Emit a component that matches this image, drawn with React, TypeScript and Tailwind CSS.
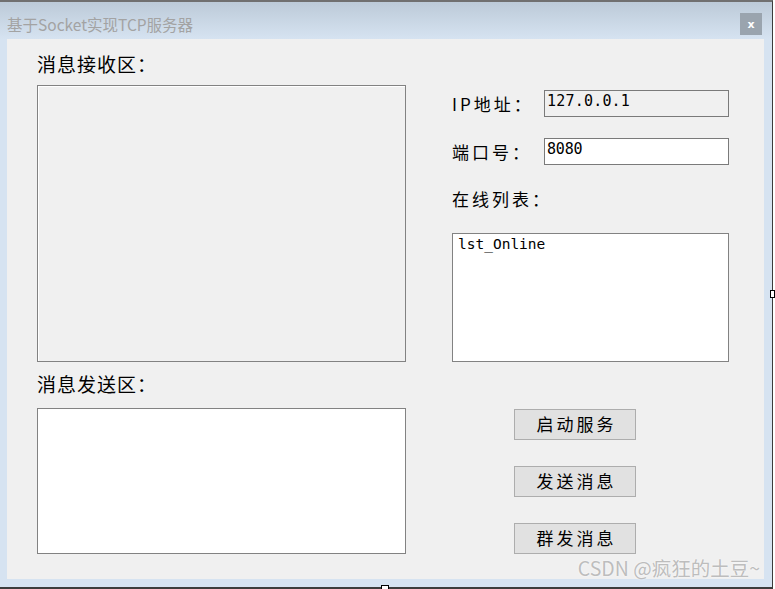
import React from 'react';

const cjk = "font-['Noto_Sans_CJK_SC','Noto_Sans',sans-serif]";
const mono = "font-['DejaVu_Sans_Mono','Liberation_Mono',monospace]";

const buttons = ['启动服务', '发送消息', '群发消息'];

const App: React.FC = () => {
  return (
    <div className="relative w-[775px] h-[589px] bg-white overflow-hidden">
      {/* window frame */}
      <div className="flex flex-col w-[773px] h-[589px] border-t-2 border-b-2 border-r border-t-[#707070] border-b-[#3c3c3c] border-r-[#3c3c3c] bg-[#d6e3f1]">
        {/* title bar */}
        <div className="flex items-center justify-between h-[37px] shrink-0 pt-[7px] pl-[7px] pr-[10px] bg-gradient-to-b from-[#bccad8] to-[#d6e3f1]">
          <span className={`${cjk} text-[15.5px] leading-[20px] text-[#a3a3a3]`}>
            基于Socket实现TCP服务器
          </span>
          <div className="flex items-center justify-center w-[22px] h-[22px] bg-[#9aa4ae] text-white text-[11px] font-bold leading-none font-['DejaVu_Sans',sans-serif]">
            x
          </div>
        </div>

        {/* client area */}
        <div className={`${cjk} flex ml-[7px] w-[757px] h-[540px] bg-[#f0f0f0] pl-[30px] gap-[46px] text-black`}>
          {/* left column */}
          <div className="flex flex-col w-[369px]">
            <div className="h-[46px] pt-[15px] text-[19px] leading-[20px] tracking-[1px]">消息接收区：</div>
            <div className="h-[277px] border border-[#828282] bg-[#f0f0f0] shadow-[inset_1px_1px_0_#ffffff]" />
            <div className="h-[46px] pt-[12px] text-[19px] leading-[20px] tracking-[1px]">消息发送区：</div>
            <div className="h-[146px] border border-[#828282] bg-white" />
          </div>

          {/* right column */}
          <div className="flex flex-col w-[277px] pt-[51px]">
            <div className="flex items-center h-[27px]">
              <span className="w-[92px] text-[17px] leading-[20px] tracking-[3px]">IP地址：</span>
              <div className={`${mono} flex-1 h-[27px] border border-[#7a7a7a] bg-[#f0f0f0] pl-[2px] text-[15px] leading-[20px] tracking-[0.2px]`}>
                127.0.0.1
              </div>
            </div>
            <div className="flex items-center h-[27px] mt-[21px]">
              <span className="w-[92px] text-[17px] leading-[20px] tracking-[3px]">端口号：</span>
              <div className={`${mono} flex-1 h-[27px] border border-[#7a7a7a] bg-white pl-[2px] text-[15px] leading-[20px] tracking-[-0.2px]`}>
                8080
              </div>
            </div>
            <div className="mt-[24px] h-[20px] text-[17px] leading-[20px] tracking-[3px]">在线列表：</div>
            <div className={`${mono} mt-[24px] h-[129px] border border-[#828282] bg-white pl-[5px] pt-[1px] text-[14.5px] leading-[18px]`}>
              lst_Online
            </div>

            <div className="flex flex-col gap-[26px] mt-[47px] ml-[62px]">
              {buttons.map((label) => (
                <div
                  key={label}
                  className="flex items-center justify-center w-[122px] h-[31px] pb-[2px] border border-[#adadad] bg-[#e1e1e1] text-[17px] leading-[20px] tracking-[3px] pl-[3px]"
                >
                  {label}
                </div>
              ))}
            </div>
          </div>
        </div>
      </div>

      {/* watermark */}
      <span className={`${cjk} absolute right-[15px] top-[556px] text-[19.5px] leading-[24px] text-[#bdbdbd] [text-shadow:0_0_2px_#ffffff]`}>
        CSDN @疯狂的土豆~
      </span>

      {/* resize handles from the capture */}
      <div className="absolute left-[770px] top-[290px] w-[5px] h-[8px] bg-white border border-black" />
      <div className="absolute left-[381px] top-[585px] w-[8px] h-[5px] bg-white border border-black" />
    </div>
  );
};

export default App;
